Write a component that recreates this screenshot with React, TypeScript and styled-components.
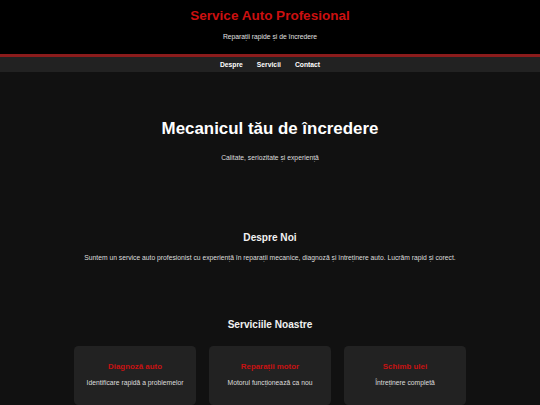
import React from "react";
import styled, { createGlobalStyle } from "styled-components";

const GlobalStyle = createGlobalStyle`
  html, body {
    margin: 0;
    padding: 0;
    background: #111111;
  }
  body {
    font-family: "Liberation Sans", Arial, sans-serif;
    font-size: 6.75px;
    color: #e6e6e6;
  }
  * { box-sizing: border-box; }
`;

const Page = styled.div`
  min-height: 405px;
  background: #111111;
`;

const Header = styled.header`
  background: #000000;
  text-align: center;
  padding: 8px 0 13.6px;
  border-bottom: 3px solid #8c1c1c;
`;

const SiteTitle = styled.h1`
  margin: 0;
  font-size: 13.5px;
  line-height: 16px;
  font-weight: 700;
  color: #cc1010;
`;

const Tagline = styled.p`
  margin: 8.7px 0 0;
  font-size: 6.75px;
  line-height: 8px;
  color: #e0e0e0;
`;

const Nav = styled.nav`
  background: #222222;
  height: 15px;
  display: flex;
  justify-content: center;
  align-items: center;
  gap: 14px;
`;

const NavLink = styled.a`
  color: #ffffff;
  font-weight: 700;
  font-size: 6.75px;
  line-height: 8px;
  text-decoration: none;
`;

const Section = styled.section<{ $top: number }>`
  text-align: center;
  padding-top: ${(p) => p.$top}px;
`;

const HeroTitle = styled.h2`
  margin: 0;
  font-size: 16.9px;
  line-height: 20px;
  font-weight: 700;
  color: #ffffff;
`;

const SectionTitle = styled.h2`
  margin: 0;
  font-size: 10.1px;
  line-height: 12px;
  font-weight: 700;
  color: #f2f2f2;
`;

const Text = styled.p<{ $gap: number }>`
  margin: ${(p) => p.$gap}px 0 0;
  font-size: 6.75px;
  line-height: 8px;
  color: #dddddd;
`;

const CardGrid = styled.div`
  display: grid;
  grid-template-columns: repeat(3, 122px);
  justify-content: center;
  gap: 13px;
  margin-top: 15px;
`;

const Card = styled.div`
  background: #222222;
  border-radius: 4.5px;
  padding: 15.7px 8px 18px;
  text-align: center;
`;

const CardTitle = styled.h3`
  margin: 0;
  font-size: 7.9px;
  line-height: 10px;
  font-weight: 700;
  color: #c81212;
`;

const services = [
  { title: "Diagnoză auto", text: "Identificare rapidă a problemelor" },
  { title: "Reparații motor", text: "Motorul funcționează ca nou" },
  { title: "Schimb ulei", text: "Întreținere completă" },
];

export default function App() {
  return (
    <Page>
      <GlobalStyle />
      <Header>
        <SiteTitle>Service Auto Profesional</SiteTitle>
        <Tagline>Reparații rapide și de încredere</Tagline>
      </Header>
      <Nav>
        <NavLink href="#despre">Despre</NavLink>
        <NavLink href="#servicii">Servicii</NavLink>
        <NavLink href="#contact">Contact</NavLink>
      </Nav>
      <Section $top={47.2}>
        <HeroTitle>Mecanicul tău de încredere</HeroTitle>
        <Text $gap={14.2}>Calitate, seriozitate și experiență</Text>
      </Section>
      <Section $top={70.6} id="despre">
        <SectionTitle>Despre Noi</SectionTitle>
        <Text $gap={9.4}>
          Suntem un service auto profesionist cu experiență în reparații mecanice, diagnoză și întreținere auto. Lucrăm rapid și corect.
        </Text>
      </Section>
      <Section $top={57.3} id="servicii">
        <SectionTitle>Serviciile Noastre</SectionTitle>
        <CardGrid>
          {services.map((s) => (
            <Card key={s.title}>
              <CardTitle>{s.title}</CardTitle>
              <Text $gap={7}>{s.text}</Text>
            </Card>
          ))}
        </CardGrid>
      </Section>
    </Page>
  );
}
